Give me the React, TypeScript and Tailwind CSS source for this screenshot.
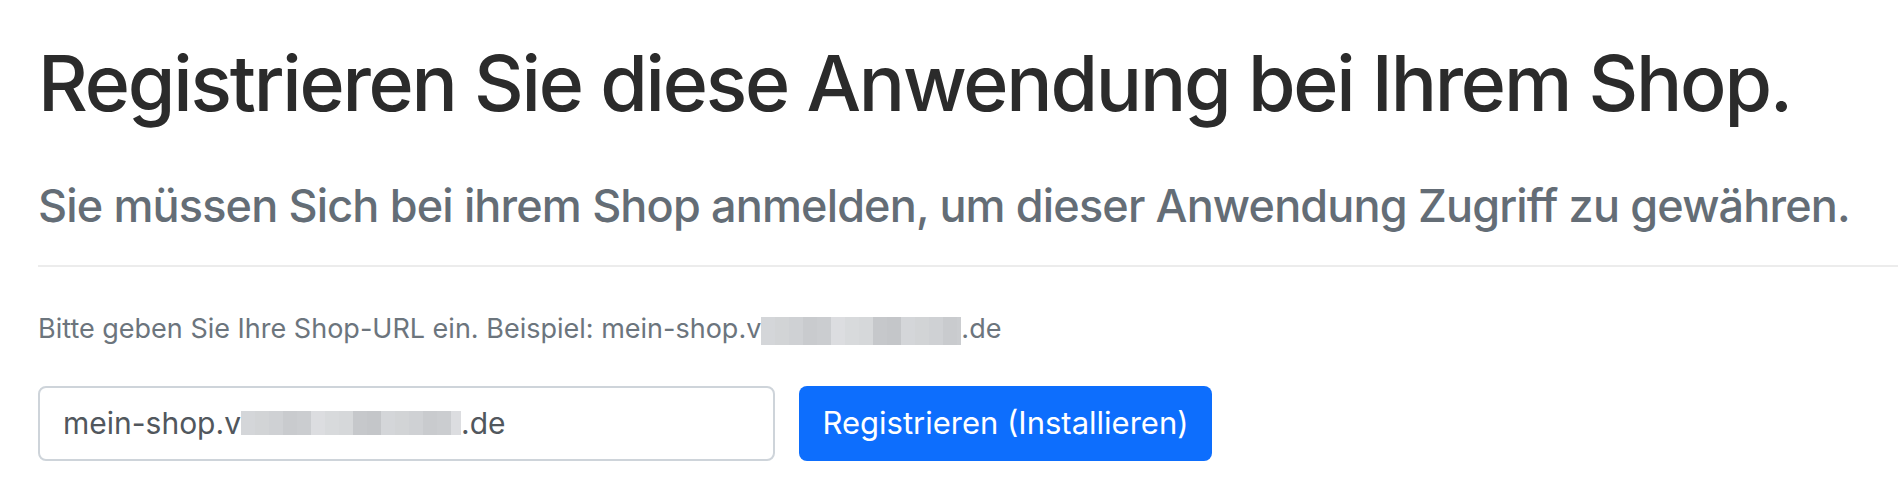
const blurShades = ["#d4d6d9", "#c9cbce", "#d8dadc", "#c4c6c9", "#cfd1d4", "#dcdde0", "#c6c8cb", "#d2d4d6", "#cbcdd0", "#d6d8da"];

const Redacted = ({ width, height }: { width: number; height: number }) => {
  const cell = 14;
  const count = Math.ceil(width / cell);
  return (
    <span
      className="inline-flex overflow-hidden align-middle"
      style={{ width, height }}
    >
      {Array.from({ length: count }).map((_, i) => (
        <span
          key={i}
          className="h-full shrink-0"
          style={{ width: cell, background: blurShades[(i * 7) % blurShades.length] }}
        />
      ))}
    </span>
  );
};

const App = () => {
  return (
    <div className="min-h-screen bg-white font-['Inter','Liberation_Sans',sans-serif] pl-[38px] pt-[37px]">
      <h1 className="whitespace-nowrap text-[77px] leading-[1.2] font-medium text-[#2b2b2b] tracking-[-2.2px]">
        Registrieren Sie diese Anwendung bei Ihrem Shop.
      </h1>
      <h4 className="mt-[50px] whitespace-nowrap text-[45px] leading-[1.2] font-medium text-[#646d76] tracking-[-0.85px]">
        Sie müssen Sich bei ihrem Shop anmelden, um dieser Anwendung Zugriff zu gewähren.
      </h4>
      <hr className="mt-[32px] border-t-2 border-[#ececec]" />
      <p className="mt-[42px] whitespace-nowrap text-[27px] leading-[1.5] text-[#6c757d]">
        Bitte geben Sie Ihre Shop-URL ein. Beispiel: mein-shop.v
        <Redacted width={200} height={28} />
        .de
      </p>
      <div className="mt-[36px] flex gap-[24px]">
        <div className="w-[737px] h-[75px] rounded-[8px] border-2 border-[#ced4da] flex items-center pl-[23px] text-[30px] text-[#51575d]">
          mein-shop.v
          <Redacted width={220} height={24} />
          .de
        </div>
        <button className="w-[413px] h-[75px] rounded-[8px] bg-[#0d6efd] text-white text-[31px]">
          Registrieren (Installieren)
        </button>
      </div>
    </div>
  );
};

export default App;
